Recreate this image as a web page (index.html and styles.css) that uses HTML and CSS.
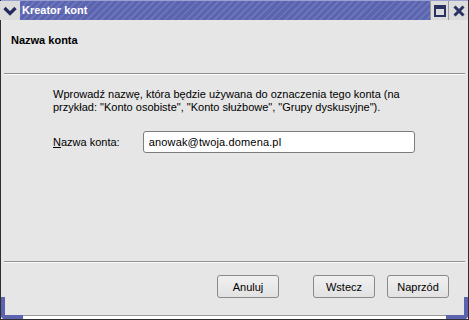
FILE: index.html
```html
<!DOCTYPE html>
<html lang="pl">
<head>
    <meta charset="UTF-8">
    <title>Kreator kont</title>
    <link rel="stylesheet" href="styles.css">
</head>
<body>
    <div class="window">
        <!-- Pasek tytułu -->
        <div class="titlebar">
            <div class="tb-btn tb-menu">
                <svg width="14" height="10" viewBox="0 0 14 10"><path d="M1.5 2 L7 7.5 L12.5 2" fill="none" stroke="#232a5c" stroke-width="3.2"/></svg>
            </div>
            <span class="title">Kreator kont</span>
            <div class="tb-btn tb-max">
                <svg width="12" height="12" viewBox="0 0 12 12"><rect x="1" y="1" width="10" height="10" fill="none" stroke="#2b3163" stroke-width="2"/><rect x="1" y="1" width="10" height="3" fill="#2b3163"/></svg>
            </div>
            <div class="tb-btn tb-close">
                <svg width="12" height="12" viewBox="0 0 12 12"><path d="M1.5 1.5 L10.5 10.5 M10.5 1.5 L1.5 10.5" stroke="#2b3163" stroke-width="3"/></svg>
            </div>
        </div>

        <div class="frame">
            <div class="page-head">
                <h1>Nazwa konta</h1>
            </div>
            <div class="separator"></div>

            <div class="content">
                <p>Wprowadź nazwę, która będzie używana do oznaczenia tego konta (na przykład: "Konto osobiste", "Konto służbowe", "Grupy dyskusyjne").</p>
                <div class="field">
                    <label for="account"><u>N</u>azwa konta:</label>
                    <input type="text" id="account" value="anowak@twoja.domena.pl">
                </div>
            </div>

            <div class="separator"></div>
            <div class="actions">
                <button class="btn">Anuluj</button>
                <button class="btn btn-back">Wstecz</button>
                <button class="btn">Naprzód</button>
            </div>
        </div>

        <!-- Dolna krawędź okna -->
        <div class="bottom-edge"></div>
        <div class="corner corner-left"></div>
        <div class="corner corner-right"></div>
    </div>
</body>
</html>
```

FILE: styles.css
```css
* {
    margin: 0;
    padding: 0;
    box-sizing: border-box;
}

body {
    font-family: 'Liberation Sans', Arial, sans-serif;
    font-size: 11px;
    color: #000;
    background: #e6e6e6;
    width: 469px;
    height: 320px;
    overflow: hidden;
}

.window {
    position: relative;
    width: 469px;
    height: 320px;
    display: flex;
    flex-direction: column;
    border-left: 1px solid #2e2e2e;
    border-right: 1px solid #2e2e2e;
    border-bottom: 1px solid #2e2e2e;
    background: #e6e6e6;
}

/* Pasek tytułu */
.titlebar {
    height: 20px;
    display: flex;
    align-items: stretch;
    background: repeating-linear-gradient(135deg, #5b64ae 0 3px, #6b74bb 3px 5px);
    border-top: 1px solid #9aa0d0;
}

.tb-btn {
    width: 19px;
    display: flex;
    align-items: center;
    justify-content: center;
    background: #dcdcdc;
}

.tb-menu {
    width: 20px;
    margin-left: -1px;
}

.tb-max {
    margin-left: auto;
    border-left: 1px solid #9a9a9a;
    border-right: 1px solid #9a9a9a;
}

.title {
    color: #fff;
    font-weight: bold;
    font-size: 11px;
    line-height: 19px;
    padding-left: 2px;
}

.frame {
    flex: 1;
    display: flex;
    flex-direction: column;
    margin: 0 3px;
}

.page-head {
    height: 53px;
    padding: 14px 0 0 7px;
}

.page-head h1 {
    font-size: 11px;
    font-weight: bold;
}

.separator {
    height: 2px;
    border-top: 1px solid #8f8f8f;
    border-bottom: 1px solid #fafafa;
}

.content {
    flex: 1;
    padding: 13px 50px 0 49px;
}

.content p {
    line-height: 13px;
    margin-bottom: 17px;
}

.field {
    display: flex;
    align-items: center;
}

.field label {
    width: 90px;
}

.field input {
    width: 273px;
    height: 22px;
    padding: 0 5px;
    border: 1px solid #7d7d7d;
    border-radius: 3px;
    background: #fff;
    font-family: 'Liberation Sans', Arial, sans-serif;
    font-size: 11px;
    letter-spacing: 0.15px;
    color: #000;
}

.actions {
    height: 52px;
    display: flex;
    justify-content: flex-end;
    align-items: flex-start;
    padding: 12px 16px 0 0;
}

.btn {
    width: 62px;
    height: 23px;
    margin-left: 12px;
    border: 1px solid #8a8a8a;
    border-radius: 3px;
    background: linear-gradient(#f0f0f0, #e2e2e2);
    font-family: 'Liberation Sans', Arial, sans-serif;
    font-size: 11px;
    color: #000;
}

.btn-back {
    margin-left: 34px;
}

.bottom-edge {
    height: 4px;
    background: #fff;
    border-top: 1px solid #9a9a9a;
}

/* Niebieskie narożniki ramki */
.corner {
    position: absolute;
    bottom: 0;
    width: 22px;
    height: 22px;
    border-bottom: 4px solid #5c64b0;
}

.corner-left {
    left: 0;
    border-left: 4px solid #5c64b0;
    border-bottom-left-radius: 4px;
}

.corner-right {
    right: 0;
    border-right: 4px solid #5c64b0;
    border-bottom-right-radius: 4px;
}
```
